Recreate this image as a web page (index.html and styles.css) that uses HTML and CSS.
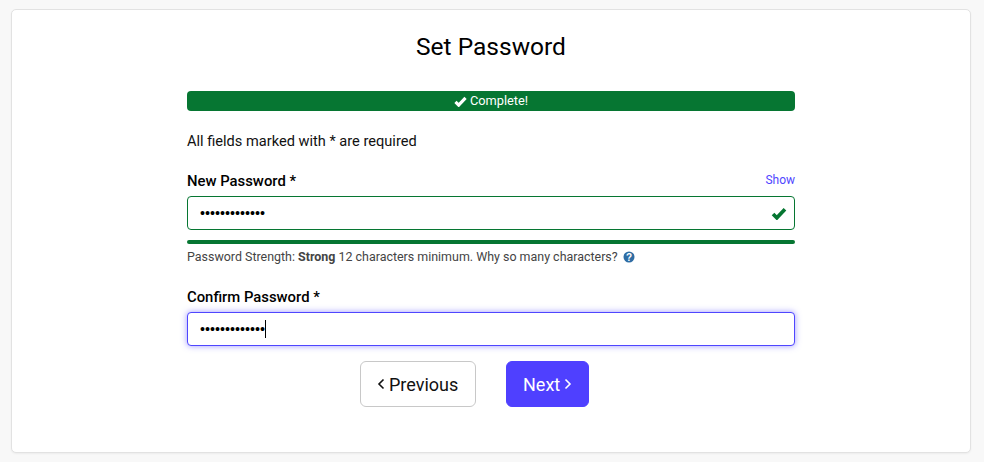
FILE: index.html
```html
<!DOCTYPE html>
<html lang="en">
<head>
<meta charset="utf-8">
<title>Set Password</title>
<link rel="stylesheet" href="styles.css">
</head>
<body>
<main class="card">
  <h1 class="title">Set Password</h1>
  <form class="form">
    <div class="progress">
      <svg class="progress-check" viewBox="0 0 14 12" aria-hidden="true"><path d="M1.5 6.5 5 10l7.5-8" /></svg>
      <span>Complete!</span>
    </div>
    <p class="required">All fields marked with * are required</p>
    <div class="label-row">
      <label class="label" for="new">New Password *</label>
      <a class="show" href="#">Show</a>
    </div>
    <div class="field">
      <input class="input input-valid" id="new" type="password" value="abcdefghijklm" readonly>
      <svg class="field-check" viewBox="0 0 14 12" aria-hidden="true"><path d="M1.5 6.5 5 10l7.5-8" /></svg>
    </div>
    <div class="strength"></div>
    <p class="hint">Password Strength: <strong>Strong</strong> 12 characters minimum. Why so many characters?
      <svg class="help" viewBox="0 0 12 12" aria-hidden="true"><circle cx="6" cy="6" r="5.5"/><text x="6" y="9.5" text-anchor="middle">?</text></svg>
    </p>
    <label class="label label-confirm" for="confirm">Confirm Password *</label>
    <div class="field">
      <input class="input input-focus" id="confirm" type="password" value="abcdefghijklm" readonly>
      <span class="caret"></span>
    </div>
    <div class="actions">
      <button class="btn btn-prev" type="button"><svg class="chev" viewBox="0 0 8 12" aria-hidden="true"><path d="M6.5 1.5 2 6l4.5 4.5"/></svg>Previous</button>
      <button class="btn btn-next" type="button">Next<svg class="chev" viewBox="0 0 8 12" aria-hidden="true"><path d="M1.5 1.5 6 6l-4.5 4.5"/></svg></button>
    </div>
  </form>
</main>
</body>
</html>
```

FILE: styles.css
```css
* { box-sizing: border-box; }
html, body { height: 100%; }
body {
  margin: 0;
  padding: 9px 13px 9px 11px;
  background: #f8f8f8;
  font-family: "Roboto", "Liberation Sans", sans-serif;
  color: #111;
}
.card {
  height: 444px;
  background: #fff;
  border: 1px solid #e2e2e2;
  border-radius: 5px;
  padding: 21px 175px 0;
  box-shadow: 0 1px 2px rgba(0,0,0,.05);
}
.title {
  margin: 0;
  height: 60px;
  font-size: 24.5px;
  line-height: 32px;
  font-weight: 400;
  text-align: center;
  color: #000;
}
.progress {
  height: 20px;
  border-radius: 4px;
  background: #067632;
  color: #fff;
  font-size: 12.8px;
  line-height: 20px;
  display: flex;
  align-items: center;
  justify-content: center;
  gap: 3px;
}
.progress-check { width: 13px; height: 11px; fill: none; stroke: #fff; stroke-width: 3.4; }
.required { margin: 20px 0 0; height: 20px; font-size: 14.6px; line-height: 20px; }
.label-row { margin-top: 20px; height: 20px; display: flex; justify-content: space-between; align-items: center; }
.label { display: block; font-size: 14.85px; line-height: 20px; font-weight: 500; color: #000; }
.show { font-size: 12px; color: #4f46ff; text-decoration: none; margin: -2px 0 0; }
.field { position: relative; margin-top: 5px; }
.input {
  display: block;
  width: 100%;
  height: 34px;
  padding: 0 12px;
  background: #fff;
  border: 1px solid #067632;
  border-radius: 4px;
  font-family: "Liberation Sans", sans-serif;
  font-size: 14.3px;
  color: #000;
  outline: none;
}
.input-focus { border-color: #4f46ff; box-shadow: 0 0 6px rgba(79,70,255,.55); }
.field-check { position: absolute; right: 8px; top: 11px; width: 16px; height: 13px; fill: none; stroke: #067632; stroke-width: 3.4; }
.caret { position: absolute; left: 78px; top: 8px; width: 1px; height: 18px; background: #000; }
.strength { margin-top: 10px; height: 4px; border-radius: 2px; background: #067632; }
.hint { margin: 6px 0 0; height: 14px; font-size: 12.45px; line-height: 14px; color: #444; }
.hint strong { font-weight: 700; }
.help { width: 12px; height: 12px; margin-left: 2px; vertical-align: -2px; }
.help circle { fill: #2e6da4; }
.help text { fill: #fff; font-size: 10px; font-weight: 700; font-family: "Liberation Sans", sans-serif; }
.label-confirm { margin-top: 23px; }
.label-confirm + .field { margin-top: 5px; }
.actions { margin-top: 15px; display: flex; justify-content: center; gap: 30px; padding-right: 33px; }
.btn {
  height: 46px;
  border-radius: 6px;
  font-family: "Roboto", "Liberation Sans", sans-serif;
  font-size: 18px;
  display: flex;
  align-items: center;
  gap: 4px;
  padding: 0 15px 0 16px;
}
.btn-prev { width: 116px; background: #fff; border: 1px solid #c8c8c8; color: #111; }
.btn-next { width: 83px; background: #4f40ff; border: 1px solid #4f40ff; color: #fff; }
.chev { flex: none; width: 8px; height: 12px; fill: none; stroke: currentColor; stroke-width: 1.6; }
```
